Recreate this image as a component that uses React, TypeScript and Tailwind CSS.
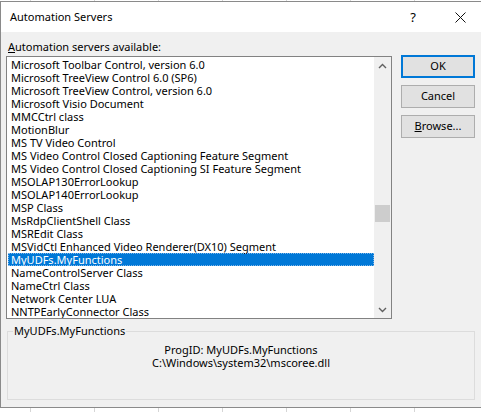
import React from 'react';

const font = { fontFamily: '"Noto Sans", "Open Sans", sans-serif' };

const servers = [
    'Microsoft Toolbar Control, version 6.0',
    'Microsoft TreeView Control 6.0 (SP6)',
    'Microsoft TreeView Control, version 6.0',
    'Microsoft Visio Document',
    'MMCCtrl class',
    'MotionBlur',
    'MS TV Video Control',
    'MS Video Control Closed Captioning Feature Segment',
    'MS Video Control Closed Captioning SI Feature Segment',
    'MSOLAP130ErrorLookup',
    'MSOLAP140ErrorLookup',
    'MSP Class',
    'MsRdpClientShell Class',
    'MSREdit Class',
    'MSVidCtl Enhanced Video Renderer(DX10) Segment',
    'MyUDFs.MyFunctions',
    'NameControlServer Class',
    'NameCtrl Class',
    'Network Center LUA',
    'NNTPEarlyConnector Class',
];

const selected = 'MyUDFs.MyFunctions';

// strip of the spreadsheet behind the dialog
const Grid: React.FC<{ h: string }> = ({ h }) => (
    <div className={`flex ${h} bg-white`}>
        <div className="w-[30px] shrink-0" />
        {[0, 1, 2, 3, 4, 5, 6].map(i => (
            <div key={i} className="w-[64px] shrink-0 border-l border-[#d6d6d6]" />
        ))}
    </div>
);

const Chevron: React.FC<{ down?: boolean }> = ({ down }) => (
    <svg width="9" height="6" viewBox="0 0 9 6" className={down ? 'rotate-180' : ''}>
        <path d="M1 5 L4.5 1.5 L8 5" fill="none" stroke="#606060" strokeWidth="1.4" />
    </svg>
);

const Button: React.FC<{ primary?: boolean; children: React.ReactNode }> = ({ primary, children }) => (
    <button
        className={`w-[74px] h-[23px] bg-[#e1e1e1] text-[11px] text-black flex items-center justify-center ${
            primary ? 'border-2 border-[#0078d7]' : 'border border-[#adadad]'
        }`}
    >
        {children}
    </button>
);

const App: React.FC = () => {
    return (
        <div className="w-[481px] h-[412px] overflow-hidden bg-white text-black" style={font}>
            <Grid h="h-[1px]" />

            {/* Window */}
            <div className="h-[407px] border border-r-0 border-[#8a8a8a] flex flex-col">
                {/* Title bar */}
                <div className="h-[30px] bg-white flex items-center pl-[9px] pt-[1px] shrink-0">
                    <span className="text-[11px] flex-1">Automation Servers</span>
                    <span className="text-[13px] w-[20px] text-center mr-[32px]">?</span>
                    <svg width="11" height="11" viewBox="0 0 11 11" className="mr-[15px]">
                        <path d="M0.5 0.5 L10.5 10.5 M10.5 0.5 L0.5 10.5" stroke="#111" strokeWidth="1" />
                    </svg>
                </div>

                {/* Body */}
                <div className="flex-1 bg-[#f0f0f0] pl-[5px] pr-[6px] pt-[6px]">
                    <div className="flex">
                        <div className="w-[386px] shrink-0">
                            <div className="text-[11px] leading-[16px] pl-[2px] mb-[1px] pt-[1px] h-[17px]">
                                <span className="underline">A</span>utomation servers available:
                            </div>
                            {/* List */}
                            <div className="h-[263px] border border-[#828282] bg-white flex">
                                <div className="flex-1 pt-[1px] pl-[1px] overflow-hidden">
                                    {servers.map(s => (
                                        <div
                                            key={s}
                                            className={`h-[13px] text-[11px] leading-[13px] pl-[3px] whitespace-nowrap ${
                                                s === selected
                                                    ? 'bg-[#0078d7] text-white outline-1 outline-dotted outline-[#7fb6e8] -outline-offset-1'
                                                    : ''
                                            }`}
                                        >
                                            {s}
                                        </div>
                                    ))}
                                </div>
                                {/* Scrollbar */}
                                <div className="w-[17px] bg-[#f0f0f0] flex flex-col items-center">
                                    <div className="h-[17px] flex items-center justify-center">
                                        <Chevron />
                                    </div>
                                    <div className="flex-1 w-full pt-[131px] px-[1px]">
                                        <div className="h-[17px] bg-[#cdcdcd]" />
                                    </div>
                                    <div className="h-[17px] flex items-center justify-center">
                                        <Chevron down />
                                    </div>
                                </div>
                            </div>
                        </div>

                        {/* Buttons */}
                        <div className="ml-[9px] pt-[17px] flex flex-col gap-[7px]">
                            <Button primary>OK</Button>
                            <Button>Cancel</Button>
                            <Button>
                                <span>
                                    <span className="underline">B</span>rowse...
                                </span>
                            </Button>
                        </div>
                    </div>

                    {/* Group box */}
                    <div className="relative mt-[12px] ml-[1px] w-[468px] h-[69px] border border-[#dcdcdc]">
                        <span className="absolute -top-[8px] left-[5px] bg-[#f0f0f0] px-[1px] text-[11px] leading-[14px]">
                            MyUDFs.MyFunctions
                        </span>
                        <div className="pt-[11px] text-center text-[11px] leading-[13px]">
                            <div>ProgID: MyUDFs.MyFunctions</div>
                            <div>C:\Windows\system32\mscoree.dll</div>
                        </div>
                    </div>
                </div>
            </div>

            <Grid h="h-[4px]" />
        </div>
    );
};

export default App;
